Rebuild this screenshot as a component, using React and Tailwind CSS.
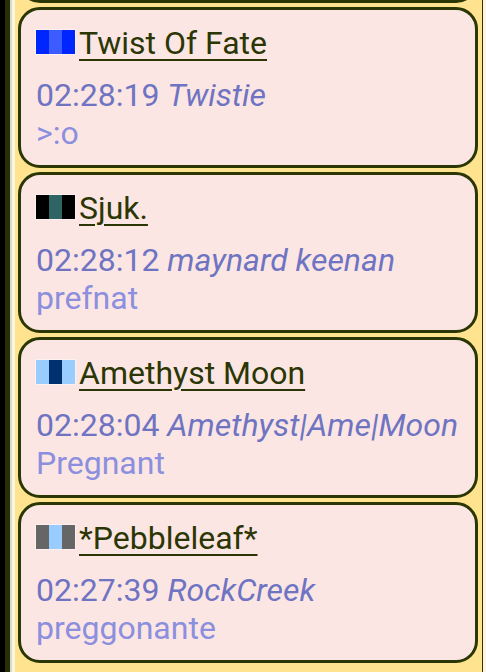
import React from 'react';

const posts = [
    { name: 'Twist Of Fate', colors: ['#0026ff', '#3d5cff', '#0026ff'], time: '02:28:19', user: 'Twistie', msg: '>:o' },
    { name: 'Sjuk.', colors: ['#000000', '#2f6464', '#000000'], time: '02:28:12', user: 'maynard keenan', msg: 'prefnat' },
    { name: 'Amethyst Moon', colors: ['#99ccff', '#003070', '#99ccff'], time: '02:28:04', user: 'Amethyst|Ame|Moon', msg: 'Pregnant' },
    { name: '*Pebbleleaf*', colors: ['#666666', '#99ccff', '#666666'], time: '02:27:39', user: 'RockCreek', msg: 'preggonante' },
];

function Swatch({ colors }) {
    return (
        <span className="flex h-[24px] mr-[4px] outline outline-1 outline-white/40">
            {colors.map((c, i) => (
                <span key={i} className="w-[13px] h-full" style={{ backgroundColor: c }}></span>
            ))}
        </span>
    );
}

function Card({ post }) {
    return (
        <div className="h-[161px] shrink-0 rounded-[22px] border-[3px] border-[#2a3704] bg-[#fce6e4] pl-[15px] pr-[11px] pt-[13px]">
            <div className="flex items-baseline">
                <Swatch colors={post.colors} />
                <span className="text-[32px] leading-[40px] text-[#2b3604] underline decoration-2 underline-offset-[5px]">{post.name}</span>
            </div>
            <div className="mt-[14px] text-[32px] leading-[36px] text-[#6f74c2] whitespace-nowrap">
                {post.time} <i>{post.user}</i>
            </div>
            <div className="mt-[2px] text-[32px] leading-[36px] text-[#8b8fdd]">{post.msg}</div>
        </div>
    );
}

export default function App() {
    return (
        <div className="w-[486px] h-[672px] overflow-hidden flex font-['Roboto',sans-serif]">
            <div className="w-[5px] bg-black"></div>
            <div className="w-[5px] bg-[#27300a]"></div>
            <div className="w-[2px] bg-[#d9d9c8]"></div>
            <div className="w-[3px] bg-[#fbf6dc]"></div>
            <div className="flex-1 bg-[#ffe38e] pl-[3px] pr-[4px] flex flex-col gap-[4px] -mt-[158px]">
                <div className="h-[161px] shrink-0 rounded-[22px] border-[3px] border-[#2a3704] bg-[#fce6e4]"></div>
                {posts.map((p, i) => (
                    <Card key={i} post={p} />
                ))}
            </div>
            <div className="w-[1px] bg-[#2a3704]"></div>
            <div className="w-[3px] bg-[#fbf6dc]"></div>
        </div>
    );
}
